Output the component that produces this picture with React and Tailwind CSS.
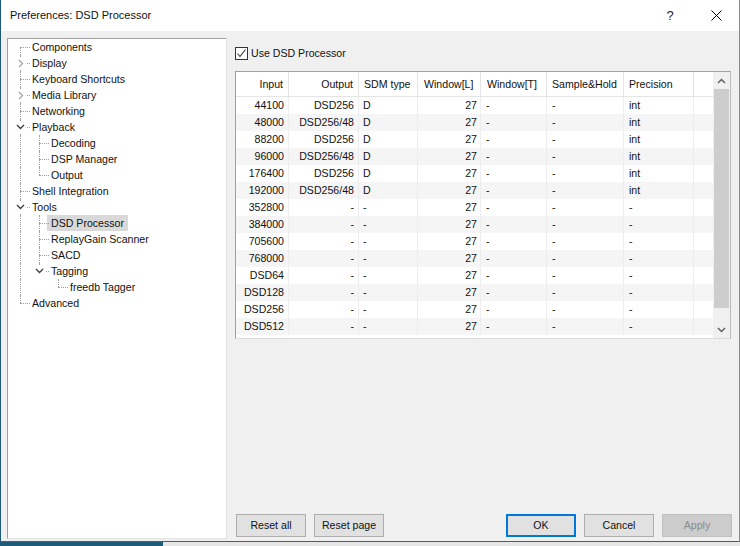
import React from "react";

const tree = [
  { label: "Components", guides: [], kind: "first" },
  { label: "Display", guides: [], kind: "tee", exp: "closed" },
  { label: "Keyboard Shortcuts", guides: [], kind: "tee" },
  { label: "Media Library", guides: [], kind: "tee", exp: "closed" },
  { label: "Networking", guides: [], kind: "tee" },
  { label: "Playback", guides: [], kind: "tee", exp: "open" },
  { label: "Decoding", guides: ["pipe"], kind: "tee" },
  { label: "DSP Manager", guides: ["pipe"], kind: "tee" },
  { label: "Output", guides: ["pipe"], kind: "elbow" },
  { label: "Shell Integration", guides: [], kind: "tee" },
  { label: "Tools", guides: [], kind: "tee", exp: "open" },
  { label: "DSD Processor", guides: ["pipe"], kind: "tee", selected: true },
  { label: "ReplayGain Scanner", guides: ["pipe"], kind: "tee" },
  { label: "SACD", guides: ["pipe"], kind: "tee" },
  { label: "Tagging", guides: ["pipe"], kind: "elbow", exp: "open" },
  { label: "freedb Tagger", guides: ["pipe", "blank"], kind: "elbow" },
  { label: "Advanced", guides: [], kind: "elbow" },
];

const rows = [
  ["44100", "DSD256", "D", "27", "-", "-", "int"],
  ["48000", "DSD256/48", "D", "27", "-", "-", "int"],
  ["88200", "DSD256", "D", "27", "-", "-", "int"],
  ["96000", "DSD256/48", "D", "27", "-", "-", "int"],
  ["176400", "DSD256", "D", "27", "-", "-", "int"],
  ["192000", "DSD256/48", "D", "27", "-", "-", "int"],
  ["352800", "-", "-", "27", "-", "-", "-"],
  ["384000", "-", "-", "27", "-", "-", "-"],
  ["705600", "-", "-", "27", "-", "-", "-"],
  ["768000", "-", "-", "27", "-", "-", "-"],
  ["DSD64", "-", "-", "27", "-", "-", "-"],
  ["DSD128", "-", "-", "27", "-", "-", "-"],
  ["DSD256", "-", "-", "27", "-", "-", "-"],
  ["DSD512", "-", "-", "27", "-", "-", "-"],
];

// header + data cell classes per column
const headCls = [
  "justify-end pr-[5px]",
  "justify-end pr-[5px]",
  "pl-[5px]",
  "pl-[6px]",
  "pl-[6px]",
  "pl-[5px]",
  "pl-[5px]",
];
const dataCls = [
  "text-right pr-[4px]",
  "text-right pr-[4px]",
  "pl-[4px]",
  "text-right pr-[3px]",
  "pl-[5px]",
  "pl-[5px]",
  "pl-[5px]",
];
const headers = ["Input", "Output", "SDM type", "Window[L]", "Window[T]", "Sample&Hold", "Precision"];

const Chevron = ({ open }) =>
  open ? (
    <svg width="9" height="6" viewBox="0 0 9 6">
      <path d="M1 1 L4.5 4.5 L8 1" stroke="#404040" strokeWidth="1.4" fill="none" />
    </svg>
  ) : (
    <svg width="6" height="9" viewBox="0 0 6 9">
      <path d="M1 1 L4.5 4.5 L1 8" stroke="#a8a8a8" strokeWidth="1.4" fill="none" />
    </svg>
  );

const TreeRow = ({ item }) => {
  return (
    <div className="flex h-4 items-center">
      <div className="w-[3px] shrink-0" />
      {item.guides.map((g, i) => (
        <div key={i} className="relative w-[19px] h-4 shrink-0">
          {g === "pipe" && (
            <span className="absolute left-[9px] top-0 h-4 border-l border-dotted border-[#a0a0a0]" />
          )}
        </div>
      ))}
      <div className="relative w-[19px] h-4 shrink-0">
        {item.kind === "first" && (
          <span className="absolute left-[9px] top-[8px] h-[8px] border-l border-dotted border-[#a0a0a0]" />
        )}
        {item.kind === "tee" && (
          <span className="absolute left-[9px] top-0 h-4 border-l border-dotted border-[#a0a0a0]" />
        )}
        {item.kind === "elbow" && (
          <span className="absolute left-[9px] top-0 h-[8px] border-l border-dotted border-[#a0a0a0]" />
        )}
        <span className="absolute left-[9px] top-[8px] w-[10px] border-t border-dotted border-[#a0a0a0]" />
        {item.exp && (
          <span className="absolute left-[3px] top-[2px] w-[13px] h-[12px] bg-white flex items-center justify-center">
            <Chevron open={item.exp === "open"} />
          </span>
        )}
      </div>
      <span
        className={
          "-ml-[2px] px-[4px] h-4 leading-4 whitespace-nowrap " +
          (item.selected ? "bg-[#d9d9d9]" : "")
        }
      >
        {item.label}
      </span>
    </div>
  );
};

const Button = ({ children, variant }) => {
  if (variant === "default")
    return (
      <div className="w-[70px] h-[23px] flex items-center justify-center bg-[#e1e1e1] border-2 border-[#0078d7]">
        {children}
      </div>
    );
  if (variant === "disabled")
    return (
      <div className="w-[70px] h-[23px] flex items-center justify-center bg-[#cccccc] border border-[#bfbfbf] text-[#8a8a8a]">
        {children}
      </div>
    );
  return (
    <div className="w-[70px] h-[23px] flex items-center justify-center bg-[#e1e1e1] border border-[#adadad]">
      {children}
    </div>
  );
};

export default function App() {
  return (
    <div className="w-[740px] h-[546px] overflow-hidden flex flex-col font-['Liberation_Sans',Arial,sans-serif] text-[10.6px] text-[#111]">
      {/* window */}
      <div className="flex flex-col border-l border-[#1d5a78] border-r border-r-[#8a8a8a] border-b border-b-[#5a5a5a]">
        {/* title bar */}
        <div className="h-[31px] bg-white flex items-center">
          <div className="pl-[9px] flex-1 text-[11px]">Preferences: DSD Processor</div>
          <div className="w-[46px] h-[31px] flex items-center justify-center text-[13px] text-[#222]">?</div>
          <div className="w-[46px] h-[31px] flex items-center justify-center">
            <svg width="11" height="11" viewBox="0 0 11 11">
              <path d="M0.5 0.5 L10.5 10.5 M10.5 0.5 L0.5 10.5" stroke="#000" strokeWidth="1" />
            </svg>
          </div>
        </div>

        {/* body */}
        <div className="h-[510px] bg-[#f0f0f0] flex">
          {/* tree */}
          <div className="pt-[7px] pl-[6px]">
            <div className="w-[220px] h-[501px] bg-white border border-t-[#a0a0a0] border-l-[#a0a0a0] border-r-[#e3e3e3] border-b-[#e3e3e3]">
              {tree.map((item) => (
                <TreeRow key={item.label} item={item} />
              ))}
            </div>
          </div>

          {/* right pane */}
          <div className="flex-1 flex flex-col pt-[16px] pb-[4px] pl-[8px] pr-[7px]">
            <div className="flex items-center h-[13px]">
              <div className="w-[13px] h-[13px] border border-[#333333] bg-white flex items-center justify-center">
                <svg width="11" height="11" viewBox="0 0 11 11">
                  <path d="M1.5 5.5 L4 8.5 L9.5 1.5" stroke="#333" strokeWidth="1.1" fill="none" />
                </svg>
              </div>
              <span className="ml-[3px]">Use DSD Processor</span>
            </div>

            {/* list view */}
            <div className="mt-[11px] w-[496px] h-[268px] bg-white border border-t-[#a0a0a0] border-l-[#a0a0a0] border-r-[#b9b9b9] border-b-[#dcdcdc] flex">
              <div className="flex-1">
                <div className="grid grid-cols-[53px_70px_59px_63px_66px_77px_70px_1fr] h-[25px] border-b border-[#e5e5e5]">
                  {headers.map((h, i) => (
                    <div key={h} className={"flex items-center pt-[1px] border-r border-[#e5e5e5] whitespace-nowrap " + headCls[i]}>
                      {h}
                    </div>
                  ))}
                  <div />
                </div>
                {rows.map((r, ri) => (
                  <div
                    key={ri}
                    className={
                      "grid grid-cols-[53px_70px_59px_63px_66px_77px_70px_1fr] h-[17px] " +
                      (ri % 2 === 1 ? "bg-[#f5f5f5]" : "bg-white")
                    }
                  >
                    {r.map((v, ci) => (
                      <div key={ci} className={"leading-[17px] border-r border-[#ededed] whitespace-nowrap " + dataCls[ci]}>
                        {v}
                      </div>
                    ))}
                    <div />
                  </div>
                ))}
              </div>
              {/* scrollbar */}
              <div className="w-[17px] h-[266px] bg-[#f0f0f0] flex flex-col">
                <div className="h-[17px] flex items-center justify-center">
                  <svg width="9" height="6" viewBox="0 0 9 6">
                    <path d="M1 5 L4.5 1.5 L8 5" stroke="#606060" strokeWidth="1.5" fill="none" />
                  </svg>
                </div>
                <div className="h-[219px] mx-[1px] bg-[#cdcdcd]" />
                <div className="flex-1" />
                <div className="h-[17px] flex items-center justify-center">
                  <svg width="9" height="6" viewBox="0 0 9 6">
                    <path d="M1 1 L4.5 4.5 L8 1" stroke="#606060" strokeWidth="1.5" fill="none" />
                  </svg>
                </div>
              </div>
            </div>

            <div className="flex-1" />

            {/* buttons */}
            <div className="flex items-center pl-[1px]">
              <Button>Reset all</Button>
              <div className="w-[8px]" />
              <Button>Reset page</Button>
              <div className="flex-1" />
              <Button variant="default">OK</Button>
              <div className="w-[8px]" />
              <Button>Cancel</Button>
              <div className="w-[8px]" />
              <Button variant="disabled">Apply</Button>
            </div>
          </div>
        </div>
      </div>
      {/* what lies beneath the window edge */}
      <div className="flex-1 flex">
        <div className="w-[163px] bg-[#1d5a78]" />
        <div className="flex-1 bg-[#e6e6e6]" />
      </div>
    </div>
  );
}
